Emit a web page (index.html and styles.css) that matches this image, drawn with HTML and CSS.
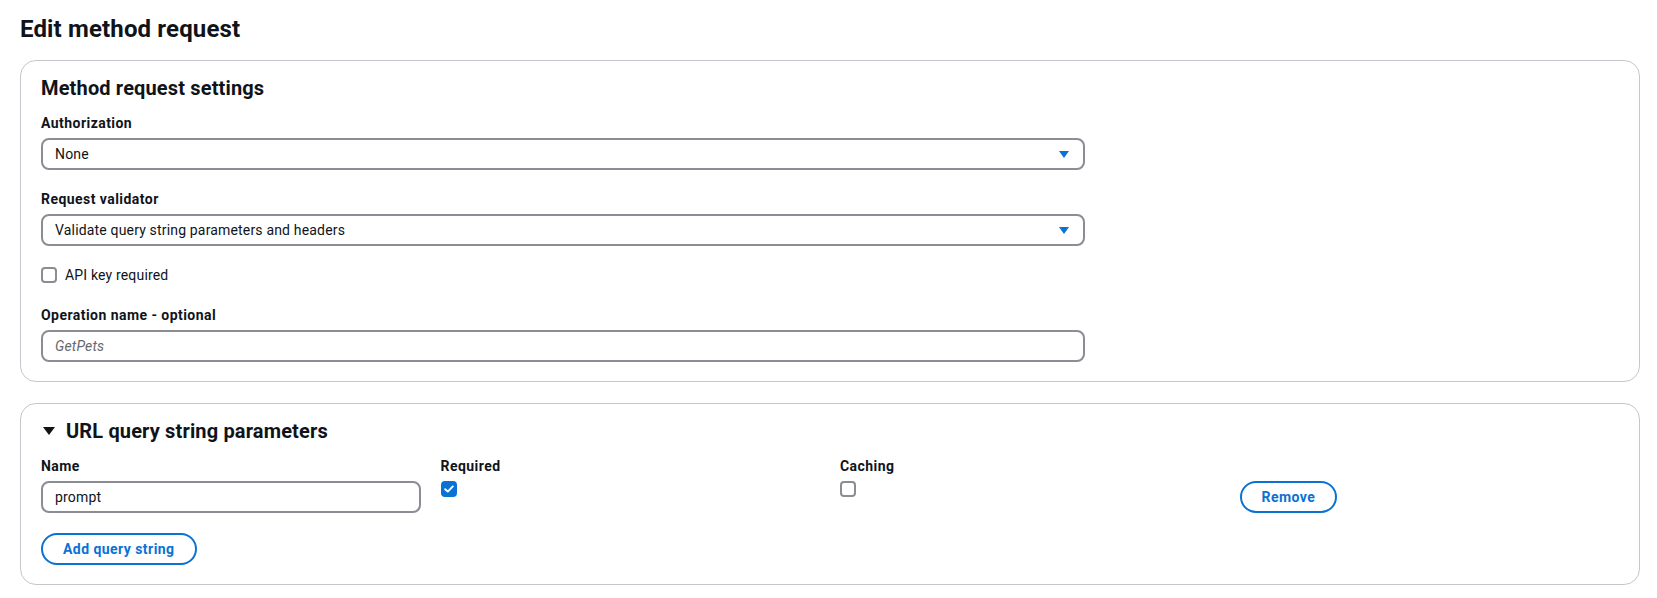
FILE: index.html
```html
<!DOCTYPE html>
<html>

<head>
    <title>Edit method request</title>
    <meta charset="utf-8">
    <link rel="stylesheet" href="styles.css">
</head>

<body>
    <div class="page">
        <h1>Edit method request</h1>

        <div class="container">
            <h2>Method request settings</h2>

            <div class="form-field">
                <label>Authorization</label>
                <div class="select">
                    <span>None</span>
                    <span class="caret"></span>
                </div>
            </div>

            <div class="form-field">
                <label>Request validator</label>
                <div class="select">
                    <span>Validate query string parameters and headers</span>
                    <span class="caret"></span>
                </div>
            </div>

            <div class="checkbox-row">
                <span class="checkbox"></span>
                <span>API key required</span>
            </div>

            <div class="form-field">
                <label>Operation name - optional</label>
                <div class="input placeholder">GetPets</div>
            </div>
        </div>

        <div class="container">
            <h2 class="expand-header"><span class="triangle"></span>URL query string parameters</h2>

            <div class="param-row">
                <div class="param-cell">
                    <label>Name</label>
                    <div class="input">prompt</div>
                </div>
                <div class="param-cell">
                    <label>Required</label>
                    <span class="checkbox checked">
                        <svg width="10" height="8" viewBox="0 0 10 8">
                            <polyline points="1.2,4.2 3.8,6.6 8.8,1.4" fill="none" stroke="#fff" stroke-width="1.9" stroke-linecap="round" stroke-linejoin="round" />
                        </svg>
                    </span>
                </div>
                <div class="param-cell">
                    <label>Caching</label>
                    <span class="checkbox"></span>
                </div>
                <div class="param-cell remove-cell">
                    <button class="btn">Remove</button>
                </div>
            </div>

            <button class="btn add-btn">Add query string</button>
        </div>
    </div>
</body>

</html>
```

FILE: styles.css
```css
body {
    margin: 0;
    background-color: #fff;
    color: #0f141a;
    font-family: Roboto, "Liberation Sans", sans-serif;
    font-size: 14px;
    line-height: 22px;
    letter-spacing: 0.17px;
}

.page {
    padding: 14px 17px 16px 20px;
}

h1 {
    margin: 0 0 16px;
    font-size: 24px;
    line-height: 30px;
    font-weight: 700;
    letter-spacing: 0.15px;
}

h2 {
    margin: 0 0 12px;
    font-size: 20px;
    line-height: 24px;
    font-weight: 700;
    letter-spacing: 0.15px;
}

.container {
    border: 1px solid #c6c6cd;
    border-radius: 16px;
    padding: 15px 20px 19px;
    margin-bottom: 21px;
}

.form-field {
    margin-bottom: 18px;
}

.form-field:last-child {
    margin-bottom: 0;
}

label {
    display: block;
    font-weight: 700;
    letter-spacing: 0.45px;
    margin-bottom: 4px;
}

.select,
.input {
    display: flex;
    align-items: center;
    justify-content: space-between;
    box-sizing: border-box;
    width: 1044px;
    height: 32px;
    padding: 0 14px 0 12px;
    border: 2px solid #8c8c94;
    border-radius: 8px;
}

.caret {
    width: 0;
    height: 0;
    border-left: 5px solid transparent;
    border-right: 5px solid transparent;
    border-top: 7px solid #0972d3;
    margin-top: 1px;
}

.placeholder {
    color: #656871;
    font-style: italic;
}

.checkbox-row {
    display: flex;
    align-items: center;
    gap: 8px;
    margin-bottom: 18px;
}

.checkbox {
    display: flex;
    align-items: center;
    justify-content: center;
    box-sizing: border-box;
    width: 16px;
    height: 16px;
    border: 2px solid #8c8c94;
    border-radius: 4px;
    background-color: #fff;
}

.checkbox.checked {
    border-color: #0972d3;
    background-color: #0972d3;
}

.expand-header {
    display: flex;
    align-items: center;
    gap: 11px;
    padding-left: 2px;
}

.triangle {
    width: 0;
    height: 0;
    border-left: 6px solid transparent;
    border-right: 6px solid transparent;
    border-top: 8px solid #0f141a;
}

.param-row {
    display: grid;
    grid-template-columns: repeat(4, 1fr);
    gap: 20px;
    margin-bottom: 20px;
}

.param-row .input {
    width: 100%;
}

.param-cell .checkbox {
    margin-top: 2px;
}

.remove-cell {
    padding-top: 26px;
}

.btn {
    box-sizing: border-box;
    height: 32px;
    padding: 0 20px;
    border: 2px solid #0972d3;
    border-radius: 20px;
    background-color: #fff;
    color: #0972d3;
    font-family: Roboto, "Liberation Sans", sans-serif;
    font-size: 14px;
    font-weight: 700;
    letter-spacing: 0.45px;
}
```
